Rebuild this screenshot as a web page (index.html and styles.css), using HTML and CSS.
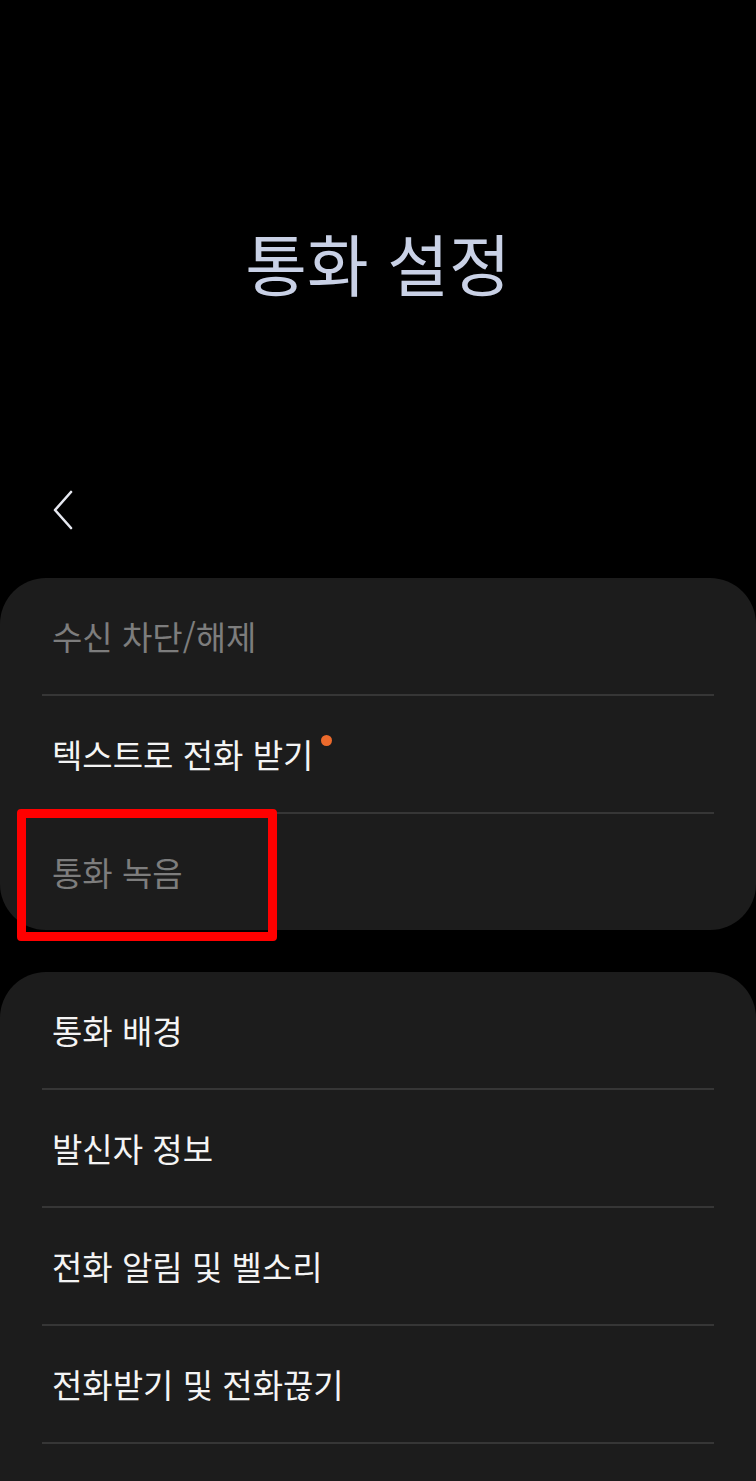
FILE: index.html
```html
<!DOCTYPE html>
<html lang="ko">
<head>
    <meta charset="UTF-8">
    <meta name="viewport" content="width=device-width, initial-scale=1.0">
    <title>통화 설정</title>
    <link rel="stylesheet" href="styles.css">
</head>
<body>

<header class="title-bar">
    <h1>통화 설정</h1>
</header>

<div class="nav-bar">
    <svg class="back" width="24" height="40" viewBox="0 0 24 40">
        <path d="M20 2 L4 20 L20 38" fill="none" stroke="#e6e8f0" stroke-width="2.6" stroke-linecap="round" stroke-linejoin="round"/>
    </svg>
</div>

<!-- 첫 번째 그룹 -->
<div class="card">
    <div class="row disabled">수신 차단/해제</div>
    <div class="row">텍스트로 전화 받기<span class="dot"></span></div>
    <div class="row disabled last highlight">통화 녹음</div>
</div>

<!-- 두 번째 그룹 -->
<div class="card second">
    <div class="row">통화 배경</div>
    <div class="row">발신자 정보</div>
    <div class="row">전화 알림 및 벨소리</div>
    <div class="row">전화받기 및 전화끊기</div>
    <div class="row"></div>
</div>

</body>
</html>
```

FILE: styles.css
```css
body {
    margin: 0;
    padding: 0;
    background-color: #000;
    font-family: "Noto Sans CJK KR", "Noto Sans", sans-serif;
    color: #f4f4f4;
    overflow: hidden;
}
.title-bar {
    height: 470px;
    display: flex;
    justify-content: center;
}
.title-bar h1 {
    margin: 216px 0 0;
    font-size: 67px;
    font-weight: 400;
    color: #c9d1e6;
    line-height: 92px;
    height: 92px;
}
.nav-bar {
    height: 108px;
    padding: 20px 0 0 51px;
    box-sizing: border-box;
}
.back {
    display: block;
}
.card {
    background-color: #1c1c1c;
    border-radius: 46px;
    position: relative;
}
.card.second {
    margin-top: 42px;
}
.row {
    height: 118px;
    margin: 0 42px;
    padding-left: 10px;
    display: flex;
    align-items: center;
    font-size: 33px;
    border-bottom: 2px solid #363636;
    box-sizing: border-box;
    position: relative;
}
.row.last {
    height: 116px;
    border-bottom: none;
}
.row.disabled {
    color: #7d7d7d;
}
.dot {
    width: 11px;
    height: 11px;
    border-radius: 50%;
    background-color: #ec6a2c;
    align-self: flex-start;
    margin-top: 39px;
    margin-left: 8px;
}
.highlight::before {
    content: "";
    position: absolute;
    left: -25px;
    top: -5px;
    width: 242px;
    height: 114px;
    border: 9px solid #ff0000;
    border-radius: 4px;
}
```
